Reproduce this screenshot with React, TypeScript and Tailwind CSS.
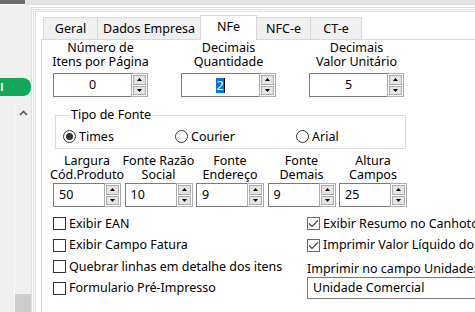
import React from 'react';

const Tri = ({ down }: { down?: boolean }) => (
  <svg width="5" height="3" viewBox="0 0 5 3" className={down ? 'rotate-180' : ''}>
    <path d="M2.5 0L5 3H0Z" fill="#000" />
  </svg>
);

const Spinner = ({ value, wide, selected }: { value: string; wide?: boolean; selected?: boolean }) => (
  <div className={`flex h-[24px] shrink-0 ${wide ? 'w-[95px]' : 'w-[68px]'}`}>
    <div
      className={`flex flex-1 items-center border border-r-0 border-[#7a7a7a] bg-white ${
        wide ? 'justify-center' : 'pl-[5px]'
      }`}
    >
      {selected ? (
        <>
          <span className="bg-[#0078d7] leading-[15px] text-white">{value}</span>
          <span className="h-[15px] w-px bg-black" />
        </>
      ) : (
        value
      )}
    </div>
    <div className="flex w-[17px] flex-col gap-px border border-[#adadad] bg-white p-px">
      <div className="flex flex-1 items-center justify-center border border-[#adadad] bg-[#e5e5e5]">
        <Tri />
      </div>
      <div className="flex flex-1 items-center justify-center border border-[#adadad] bg-[#e5e5e5]">
        <Tri down />
      </div>
    </div>
  </div>
);

const Radio = ({ label, on, w }: { label: string; on?: boolean; w: string }) => (
  <div className={`flex h-[13px] items-center ${w}`}>
    <div className="flex h-[13px] w-[13px] items-center justify-center rounded-full border border-[#333] bg-white">
      {on && <div className="h-[7px] w-[7px] rounded-full bg-[#333]" />}
    </div>
    <span className="ml-[3px]">{label}</span>
  </div>
);

const Check = ({ label, on }: { label: string; on?: boolean }) => (
  <div className="flex h-[21.5px] items-center whitespace-nowrap">
    <div
      className={`flex h-[13px] w-[13px] shrink-0 items-center justify-center border bg-white ${
        on ? 'border-[#6b6b6b]' : 'border-[#333]'
      }`}
    >
      {on && (
        <svg width="11" height="9" viewBox="0 0 11 9">
          <path d="M1 4.5L4 7.5L10 1.5" stroke="#444" strokeWidth="1.2" fill="none" />
        </svg>
      )}
    </div>
    <span className="ml-[3px]">{label}</span>
  </div>
);

const tabs = [
  { name: 'Geral', cls: 'w-[54px] h-[22px] border-l border-t bg-[#f0f0f0]' },
  { name: 'Dados Empresa', cls: 'w-[103px] h-[22px] border-l border-t bg-[#f0f0f0]' },
  { name: 'NFe', cls: 'w-[57px] h-[25px] border-x border-t bg-white -mb-px relative z-10' },
  { name: 'NFC-e', cls: 'w-[53px] h-[22px] border-t bg-[#f0f0f0]' },
  { name: 'CT-e', cls: 'w-[52px] h-[22px] border-x border-t bg-[#f0f0f0]' },
];

const row2 = [
  { l1: 'Largura', l2: 'Cód.Produto', v: '50' },
  { l1: 'Fonte Razão', l2: 'Social', v: '10' },
  { l1: 'Fonte', l2: 'Endereço', v: '9' },
  { l1: 'Fonte', l2: 'Demais', v: '9' },
  { l1: 'Altura', l2: 'Campos', v: '25' },
];

export default function App() {
  return (
    <div className="flex h-[312px] w-[475px] flex-col overflow-hidden bg-white font-['Noto_Sans',sans-serif] text-[12.5px] leading-[14px] text-black">
      <div className="flex h-[5px] shrink-0">
        <div className="h-[4px] w-[25px] bg-[#6d6d6d]" />
        <div className="flex-1 bg-[#e3e3e3]" />
      </div>
      <div className="flex flex-1">
        {/* sidebar */}
        <div className="flex w-[31px] shrink-0 flex-col bg-[#f0f0f0]">
          <div className="h-[73px]" />
          <div className="flex h-[18px] items-center overflow-hidden rounded-r-[8px] bg-[#12a75a] font-bold text-white">
            <span className="-ml-[3px] text-[11px]">il</span>
          </div>
          <div className="h-[9px]" />
          <div className="flex flex-1">
            <div className="w-[14px]" />
            <div className="w-px bg-[#fafafa]" />
            <div className="flex flex-1 flex-col">
              <div className="flex justify-center pt-[5px]">
                <svg width="9" height="6" viewBox="0 0 9 6">
                  <path d="M1 5L4.5 1.5L8 5" stroke="#555" strokeWidth="1.6" fill="none" />
                </svg>
              </div>
              <div className="flex-1" />
              <div className="h-[35px] bg-[#cdcdcd]" />
            </div>
          </div>
        </div>

        {/* window */}
        <div className="flex-1 overflow-hidden bg-white pt-[2px]">
          <div className="border-l border-t border-[#dfdfdf] pl-px pt-px">
            <div className="border-l border-t border-[#dfdfdf] pl-px pt-px">
              <div className="border-l border-t border-[#dfdfdf] pl-[5px] pt-[3px]">
                {/* tabs */}
                <div className="flex h-[24px] items-end pl-[2px]">
                  {tabs.map((t) => (
                    <div
                      key={t.name}
                      className={`flex shrink-0 justify-center border-[#d9d9d9] pt-[4px] ${t.cls}`}
                    >
                      {t.name}
                    </div>
                  ))}
                </div>

                {/* panel */}
                <div className="h-[290px] w-[470px] shrink-0 border border-[#d9d9d9] bg-white">
                  {/* row 1 */}
                  <div className="flex gap-[33px] pl-[11px] pt-[1px]">
                    {[
                      { l1: 'Número de', l2: 'Itens por Página', v: '0' },
                      { l1: 'Decimais', l2: 'Quantidade', v: '2', sel: true },
                      { l1: 'Decimais', l2: 'Valor Unitário', v: '5' },
                    ].map((c) => (
                      <div key={c.l2} className="flex w-[95px] flex-col items-center">
                        <div className="whitespace-nowrap text-center">
                          <div>{c.l1}</div>
                          <div>{c.l2}</div>
                        </div>
                        <div className="mt-[4px]">
                          <Spinner value={c.v} wide selected={c.sel} />
                        </div>
                      </div>
                    ))}
                  </div>

                  {/* font type */}
                  <fieldset className="ml-[13px] mt-[11px] w-[351px] border border-[#dcdcdc] pb-[5px] pl-[7px]">
                    <legend className="ml-[7px] px-[1px]">Tipo de Fonte</legend>
                    <div className="mt-[8px] flex">
                      <Radio label="Times" on w="w-[112px]" />
                      <Radio label="Courier" w="w-[121px]" />
                      <Radio label="Arial" w="w-[80px]" />
                    </div>
                  </fieldset>

                  {/* row 2 */}
                  <div className="mt-[5px] flex gap-[3.5px] pl-[11px]">
                    {row2.map((c, i) => (
                      <div key={i} className="flex w-[68px] flex-col items-center">
                        <div className="whitespace-nowrap text-center">
                          <div>{c.l1}</div>
                          <div>{c.l2}</div>
                        </div>
                        <div className="mt-px">
                          <Spinner value={c.v} />
                        </div>
                      </div>
                    ))}
                  </div>

                  {/* options */}
                  <div className="mt-[6px] flex pl-[11px]">
                    <div className="w-[254px] shrink-0">
                      <Check label="Exibir EAN" />
                      <Check label="Exibir Campo Fatura" />
                      <Check label="Quebrar linhas em detalhe dos itens" />
                      <Check label="Formulario Pré-Impresso" />
                    </div>
                    <div className="flex-1">
                      <Check label="Exibir Resumo no Canhoto" on />
                      <Check label="Imprimir Valor Líquido do Item" on />
                      <div className="mt-[6px] whitespace-nowrap">Imprimir no campo Unidade:</div>
                      <div className="mt-px flex h-[22px] w-[200px] items-center border border-[#7a7a7a] pl-[5px]">
                        Unidade Comercial
                      </div>
                    </div>
                  </div>
                </div>
              </div>
            </div>
          </div>
        </div>
      </div>
    </div>
  );
}
